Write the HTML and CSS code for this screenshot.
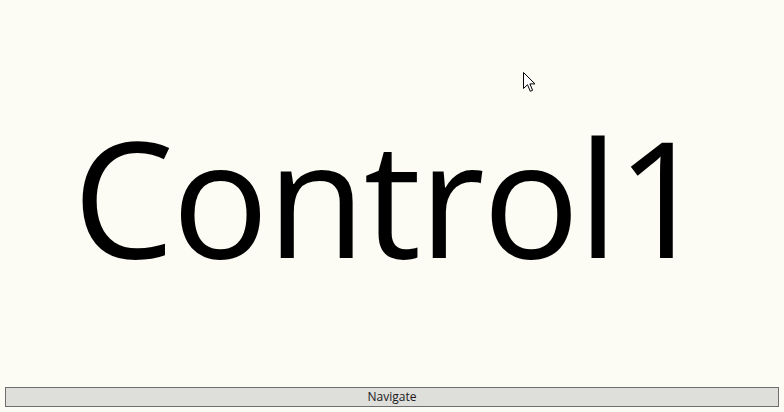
FILE: index.html
```html
<!DOCTYPE html>
<html lang="en">
<head>
<meta charset="utf-8">
<title>Control1</title>
<link rel="stylesheet" href="styles.css">
</head>
<body>
<div class="window">
  <main class="stage">
    <div class="big-label">Control1</div>
  </main>
  <button class="nav-button" type="button">Navigate</button>
  <svg class="cursor" width="13" height="21" viewBox="0 0 13 21" aria-hidden="true">
    <path d="M0.5 0.5 L0.5 16.5 L4.5 12.7 L7.3 19.3 L9.6 18.3 L6.9 11.9 L12 11.9 Z" fill="#ffffff" stroke="#000000" stroke-width="1" stroke-linejoin="miter"/>
  </svg>
</div>
</body>
</html>
```
FILE: styles.css
```css
html, body {
  margin: 0;
  padding: 0;
}
body {
  background: #fcfcf4;
  font-family: "Open Sans", "Noto Sans", "DejaVu Sans", sans-serif;
}
.window {
  position: relative;
  width: 784px;
  height: 412px;
  display: flex;
  flex-direction: column;
  overflow: hidden;
}
.stage {
  flex: 1;
  display: flex;
  align-items: center;
  justify-content: center;
}
.big-label {
  font-size: 161px;
  line-height: 1;
  color: #000;
  letter-spacing: -2px;
  margin-top: 3px;
  margin-right: 5px;
}
.nav-button {
  margin: 0 5px 5px 5px;
  height: 20px;
  padding: 0;
  border: 1px solid #6e6e6e;
  background: #dededa;
  color: #1a1a1a;
  font-family: "Open Sans", "Noto Sans", sans-serif;
  font-size: 12px;
  line-height: 18px;
  text-align: center;
}
.cursor {
  position: absolute;
  left: 523px;
  top: 72px;
}
```
